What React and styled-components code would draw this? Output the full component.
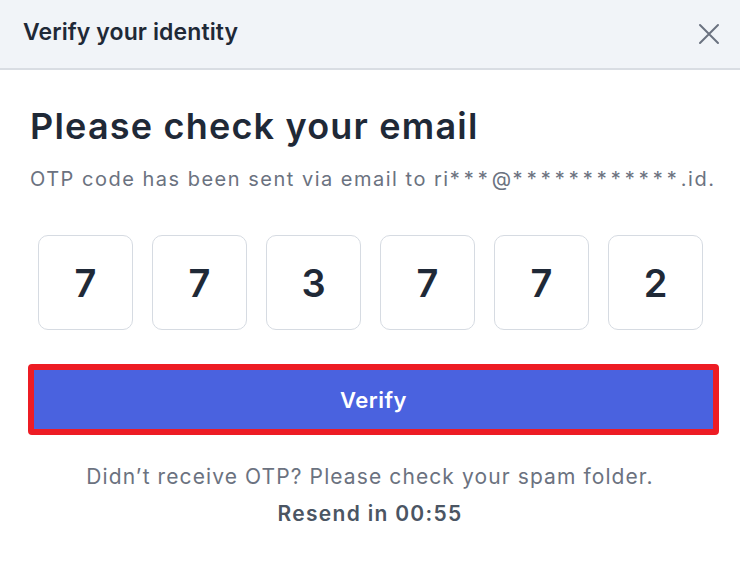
import React, { useState } from 'react'
import styled, { createGlobalStyle } from 'styled-components'

const GlobalStyle = createGlobalStyle`
    html, body {
        margin: 0;
        padding: 0;
        background: #ffffff;
        font-family: Inter, "Noto Sans", "Liberation Sans", sans-serif;
    }
`

function CloseIcon() {
    return (
        <svg width="22" height="22" viewBox="0 0 22 22" fill="none">
            <path d="M2 2 L20 20 M20 2 L2 20" stroke="#6b7280" strokeWidth="2" strokeLinecap="round" />
        </svg>
    )
}

export default function App() {
    const [code] = useState(['7', '7', '3', '7', '7', '2'])

    return (
        <Wrapper>
            <GlobalStyle />
            <Header>
                <Title>Verify your identity</Title>
                <CloseButton aria-label="Close">
                    <CloseIcon />
                </CloseButton>
            </Header>
            <Body>
                <Heading>Please check your email</Heading>
                <Subtitle>
                    OTP code has been sent via email to ri<Masked>***</Masked>@<Masked>************</Masked>.id.
                </Subtitle>
                <CodeRow>
                    {code.map((digit, i) => (
                        <CodeBox key={i}>{digit}</CodeBox>
                    ))}
                </CodeRow>
                <VerifyButton>Verify</VerifyButton>
                <Footer>
                    <Hint>Didn’t receive OTP? Please check your spam folder.</Hint>
                    <Resend>Resend in 00:55</Resend>
                </Footer>
            </Body>
        </Wrapper>
    )
}

const Wrapper = styled.div`
    width: 740px;
    height: 561px;
    background: #ffffff;
    display: flex;
    flex-direction: column;
    overflow: hidden;
`

const Header = styled.div`
    height: 70px;
    box-sizing: border-box;
    display: flex;
    align-items: center;
    justify-content: space-between;
    padding: 0 20px 4px 23px;
    background: #f1f4f8;
    border-bottom: 2px solid #d9dde3;
    flex-shrink: 0;
`

const Title = styled.h1`
    margin: 0;
    font-size: 23px;
    font-weight: 600;
    color: #1f2937;
    letter-spacing: 0.1px;
`

const CloseButton = styled.button`
    border: none;
    background: transparent;
    padding: 0;
    margin-top: 4px;
    display: flex;
    cursor: pointer;
`

const Body = styled.div`
    padding: 35px 30px 0 30px;
    display: flex;
    flex-direction: column;
`

const Heading = styled.h2`
    margin: 0;
    font-size: 36px;
    font-weight: 600;
    line-height: 42px;
    color: #1f2937;
    letter-spacing: 1.2px;
`

const Subtitle = styled.p`
    margin: 19px 0 0;
    font-size: 20px;
    line-height: 26px;
    color: #6b7280;
    letter-spacing: 1.5px;
    white-space: nowrap;
`

const Masked = styled.span`
    letter-spacing: 4px;
`

const CodeRow = styled.div`
    display: flex;
    gap: 19px;
    padding-left: 8px;
    margin-top: 43px;
`

const CodeBox = styled.div`
    width: 95px;
    height: 95px;
    box-sizing: border-box;
    border: 1.5px solid #d6dbe2;
    border-radius: 10px;
    display: flex;
    align-items: center;
    justify-content: center;
    font-size: 38px;
    font-weight: 600;
    color: #1f2937;
`

const VerifyButton = styled.button`
    margin: 34px 0 0 -2px;
    width: 691px;
    height: 71px;
    flex-shrink: 0;
    border: 6px solid #ed1c24;
    border-radius: 4px;
    background: #4a62df;
    color: #ffffff;
    font-family: inherit;
    font-size: 22px;
    font-weight: 600;
    letter-spacing: 0.5px;
    cursor: pointer;
`

const Footer = styled.div`
    margin-top: 29px;
    display: flex;
    flex-direction: column;
    align-items: center;
    gap: 11px;
`

const Hint = styled.p`
    margin: 0;
    font-size: 21px;
    line-height: 26px;
    color: #6b7280;
    letter-spacing: 1.1px;
    white-space: nowrap;
`

const Resend = styled.p`
    margin: 0;
    font-size: 21px;
    line-height: 26px;
    font-weight: 600;
    color: #4b5563;
    letter-spacing: 1.3px;
`
